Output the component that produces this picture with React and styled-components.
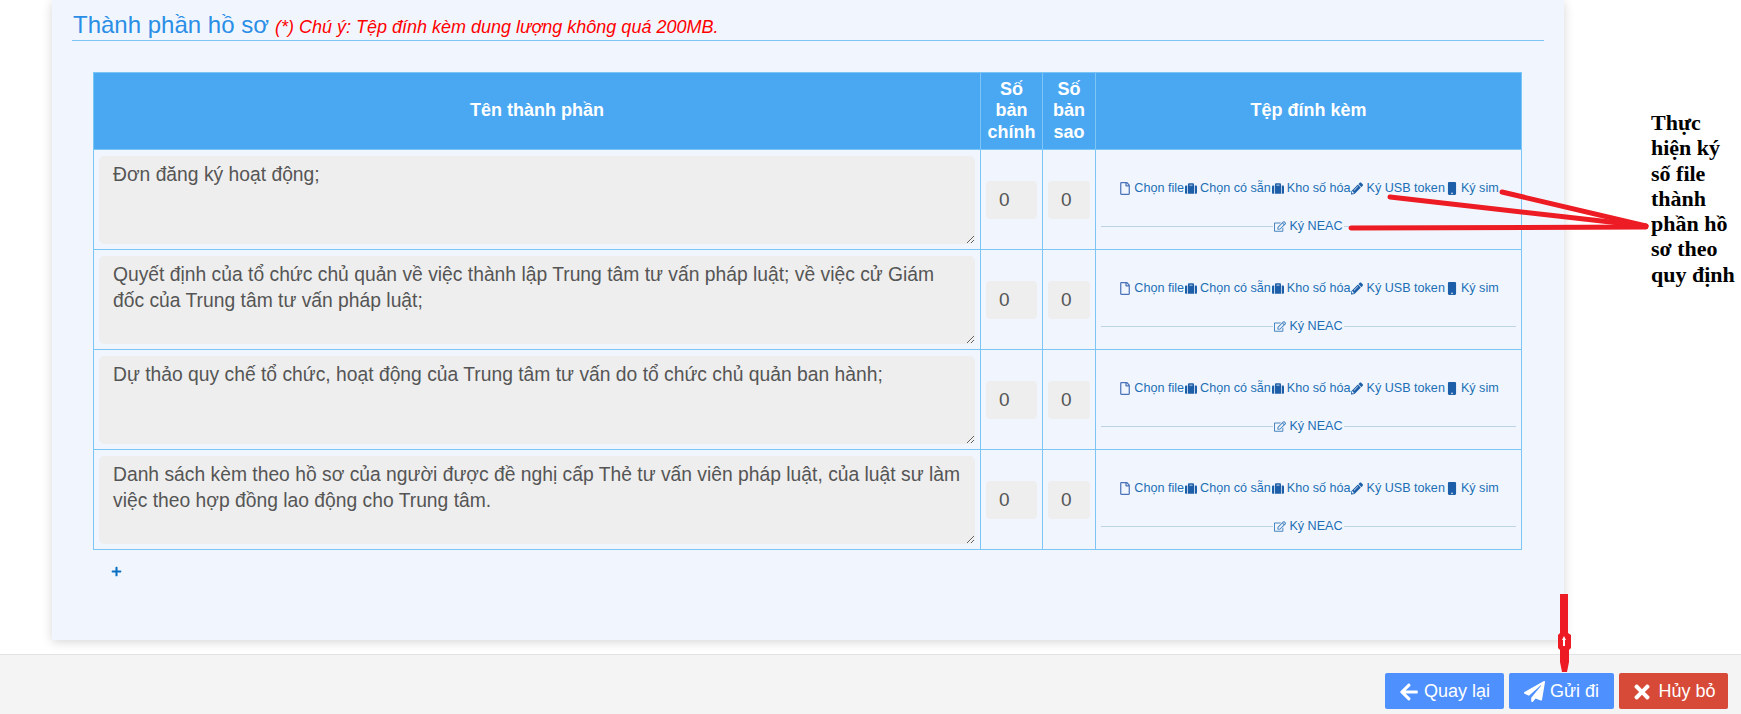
import React from 'react';
import styled, { createGlobalStyle } from 'styled-components';
import {
  FaRegFile,
  FaSuitcase,
  FaPencilAlt,
  FaMobile,
  FaRegEdit,
  FaArrowLeft,
  FaPaperPlane,
  FaTimes,
  FaPlus,
} from 'react-icons/fa';

const GlobalStyle = createGlobalStyle`
  html, body {
    margin: 0;
    padding: 0;
    background: #fff;
    font-family: "Liberation Sans", Arial, sans-serif;
  }
`;

const Page = styled.div`
  position: relative;
  width: 1741px;
  height: 714px;
  overflow: hidden;
  display: flex;
  flex-direction: column;
`;

const Content = styled.div`
  flex: 1;
  padding: 0 177px 0 52px;
`;

const Panel = styled.section`
  height: 640px;
  box-sizing: border-box;
  padding: 12px 20px 0;
  background: #f1f6fe;
  box-shadow: 0 2px 10px rgba(0, 0, 0, 0.16);
`;

const SectionTitle = styled.div`
  height: 28px;
  padding-left: 1px;
  border-bottom: 1px solid #7cc5f7;
  color: #2b8ee6;
  font-size: 24px;
  line-height: 25px;
  white-space: nowrap;
`;

const Note = styled.em`
  margin-left: 6px;
  color: #f00;
  font-size: 18px;
`;

const Table = styled.table`
  width: 1428px;
  margin: 31px 0 0 21px;
  border-collapse: collapse;
  table-layout: fixed;
`;

const HeadCell = styled.th`
  box-sizing: border-box;
  height: 77px;
  padding: 4px;
  border: 1px solid #7cc5f7;
  background: #4aa8f2;
  color: #fff;
  font-size: 18px;
  line-height: 21.5px;
  font-weight: bold;
`;

const Cell = styled.td`
  box-sizing: border-box;
  height: 100px;
  padding: 6px 5px 5px;
  border: 1px solid #7cc5f7;
  vertical-align: middle;
`;

const NameBox = styled.textarea`
  display: block;
  box-sizing: border-box;
  width: 100%;
  height: 88px;
  padding: 6px 14px;
  border: 0;
  border-radius: 5px;
  background: #eee;
  color: #555;
  font-family: inherit;
  font-size: 19.3px;
  line-height: 26px;
  outline: none;
  resize: vertical;
`;

const CountBox = styled.input`
  display: block;
  box-sizing: border-box;
  width: 100%;
  height: 38px;
  padding: 0 0 0 13px;
  border: 0;
  border-radius: 4px;
  background: #eee;
  color: #555;
  font-family: inherit;
  font-size: 19px;
  outline: none;
`;

const LinkRow = styled.div`
  display: flex;
  justify-content: center;
  margin-top: 15px;
  white-space: nowrap;
`;

const FileLink = styled.a`
  display: inline-flex;
  align-items: center;
  gap: 3px;
  margin-left: 1px;
  color: #1c6fb5;
  font-size: 12.6px;
  line-height: 17px;
  svg {
    width: 12px;
    height: 13px;
    color: ${props => props.$iconColor || '#1c5fa8'};
  }
`;

const SignRow = styled.div`
  position: relative;
  display: flex;
  justify-content: center;
  margin-top: 21px;
  &::before {
    content: '';
    position: absolute;
    left: 0;
    right: 0;
    top: 8px;
    border-top: 1px solid #bcd4e6;
  }
`;

const SignLink = styled(FileLink)`
  position: relative;
  margin: 0;
  padding: 0 1px;
  background: #f1f6fe;
`;

const AddButton = styled.div`
  margin: 16px 0 0 39px;
  color: #0b6fc2;
  line-height: 0;
  svg {
    width: 11px;
    height: 11px;
  }
`;

const Footer = styled.footer`
  display: flex;
  justify-content: flex-end;
  gap: 5px;
  height: 60px;
  box-sizing: border-box;
  padding: 18px 13px 0 0;
  border-top: 1px solid #e2e2e2;
  background: #f4f4f4;
`;

const ActionButton = styled.button`
  display: inline-flex;
  align-items: center;
  justify-content: center;
  gap: 5px;
  width: ${props => props.$width}px;
  height: 36px;
  padding: 1px 0 0;
  border: 0;
  border-radius: 2px;
  background: ${props => (props.$danger ? '#d84a38' : '#4d90fe')};
  color: #fff;
  font-family: inherit;
  font-size: 18px;
  svg {
    width: ${props => props.$iconSize}px;
    height: ${props => props.$iconSize}px;
  }
`;

const Callout = styled.div`
  position: absolute;
  left: 1651px;
  top: 110px;
  width: 88px;
  color: #000;
  font-family: "Liberation Serif", "Times New Roman", serif;
  font-size: 22px;
  line-height: 25.3px;
  font-weight: bold;
`;

const Marks = styled.svg`
  position: absolute;
  left: 0;
  top: 0;
  pointer-events: none;
`;

const rows = [
  'Đơn đăng ký hoạt động;',
  'Quyết định của tổ chức chủ quản về việc thành lập Trung tâm tư vấn pháp luật; về việc cử Giám đốc của Trung tâm tư vấn pháp luật;',
  'Dự thảo quy chế tổ chức, hoạt động của Trung tâm tư vấn do tổ chức chủ quản ban hành;',
  'Danh sách kèm theo hồ sơ của người được đề nghị cấp Thẻ tư vấn viên pháp luật, của luật sư làm việc theo hợp đồng lao động cho Trung tâm.',
];

const links = [
  { label: 'Chọn file', Icon: FaRegFile, iconColor: '#4a72b8' },
  { label: 'Chọn có sẵn', Icon: FaSuitcase },
  { label: 'Kho số hóa', Icon: FaSuitcase },
  { label: 'Ký USB token', Icon: FaPencilAlt },
  { label: 'Ký sim', Icon: FaMobile },
];

export default function App() {
  return (
    <Page>
      <GlobalStyle />
      <Content>
        <Panel>
          <SectionTitle>
            Thành phần hồ sơ
            <Note>(*) Chú ý: Tệp đính kèm dung lượng không quá 200MB.</Note>
          </SectionTitle>
          <Table>
            <colgroup>
              <col style={{ width: 887 }} />
              <col style={{ width: 62 }} />
              <col style={{ width: 53 }} />
              <col style={{ width: 426 }} />
            </colgroup>
            <thead>
              <tr>
                <HeadCell>Tên thành phần</HeadCell>
                <HeadCell>Số bản chính</HeadCell>
                <HeadCell>Số bản sao</HeadCell>
                <HeadCell>Tệp đính kèm</HeadCell>
              </tr>
            </thead>
            <tbody>
              {rows.map(name => (
                <tr key={name}>
                  <Cell>
                    <NameBox readOnly defaultValue={name} />
                  </Cell>
                  <Cell>
                    <CountBox readOnly defaultValue="0" />
                  </Cell>
                  <Cell>
                    <CountBox readOnly defaultValue="0" />
                  </Cell>
                  <Cell>
                    <LinkRow>
                      {links.map(({ label, Icon, iconColor }) => (
                        <FileLink key={label} $iconColor={iconColor}>
                          <Icon />
                          {label}
                        </FileLink>
                      ))}
                    </LinkRow>
                    <SignRow>
                      <SignLink $iconColor="#4a86c0">
                        <FaRegEdit />
                        Ký NEAC
                      </SignLink>
                    </SignRow>
                  </Cell>
                </tr>
              ))}
            </tbody>
          </Table>
          <AddButton>
            <FaPlus />
          </AddButton>
        </Panel>
      </Content>
      <Footer>
        <ActionButton $width={119} $iconSize={20}>
          <FaArrowLeft />
          Quay lại
        </ActionButton>
        <ActionButton $width={105} $iconSize={21}>
          <FaPaperPlane />
          Gửi đi
        </ActionButton>
        <ActionButton $width={109} $iconSize={22} $danger>
          <FaTimes />
          Hủy bỏ
        </ActionButton>
      </Footer>
      <Callout>Thực hiện ký số file thành phần hồ sơ theo quy định</Callout>
      <Marks width="1741" height="714" viewBox="0 0 1741 714">
        <g stroke="#ed1c24" strokeWidth="5" strokeLinecap="round" fill="none">
          <path d="M1502 192 L1646 226" />
          <path d="M1390 197 L1646 226" />
          <path d="M1351 228 L1646 227" />
        </g>
        <path
          d="M1560 594 h8 v39 l3 2 v13 l-2 2 v12 l-2 10 h-5 l-2 -10 v-12 l-2 -2 v-13 l2 -2 z"
          fill="#ed1c24"
        />
        <path d="M1564 636 l2 4 h-1 v6 h-2 v-6 h-1 z" fill="#fff" />
      </Marks>
    </Page>
  );
}
